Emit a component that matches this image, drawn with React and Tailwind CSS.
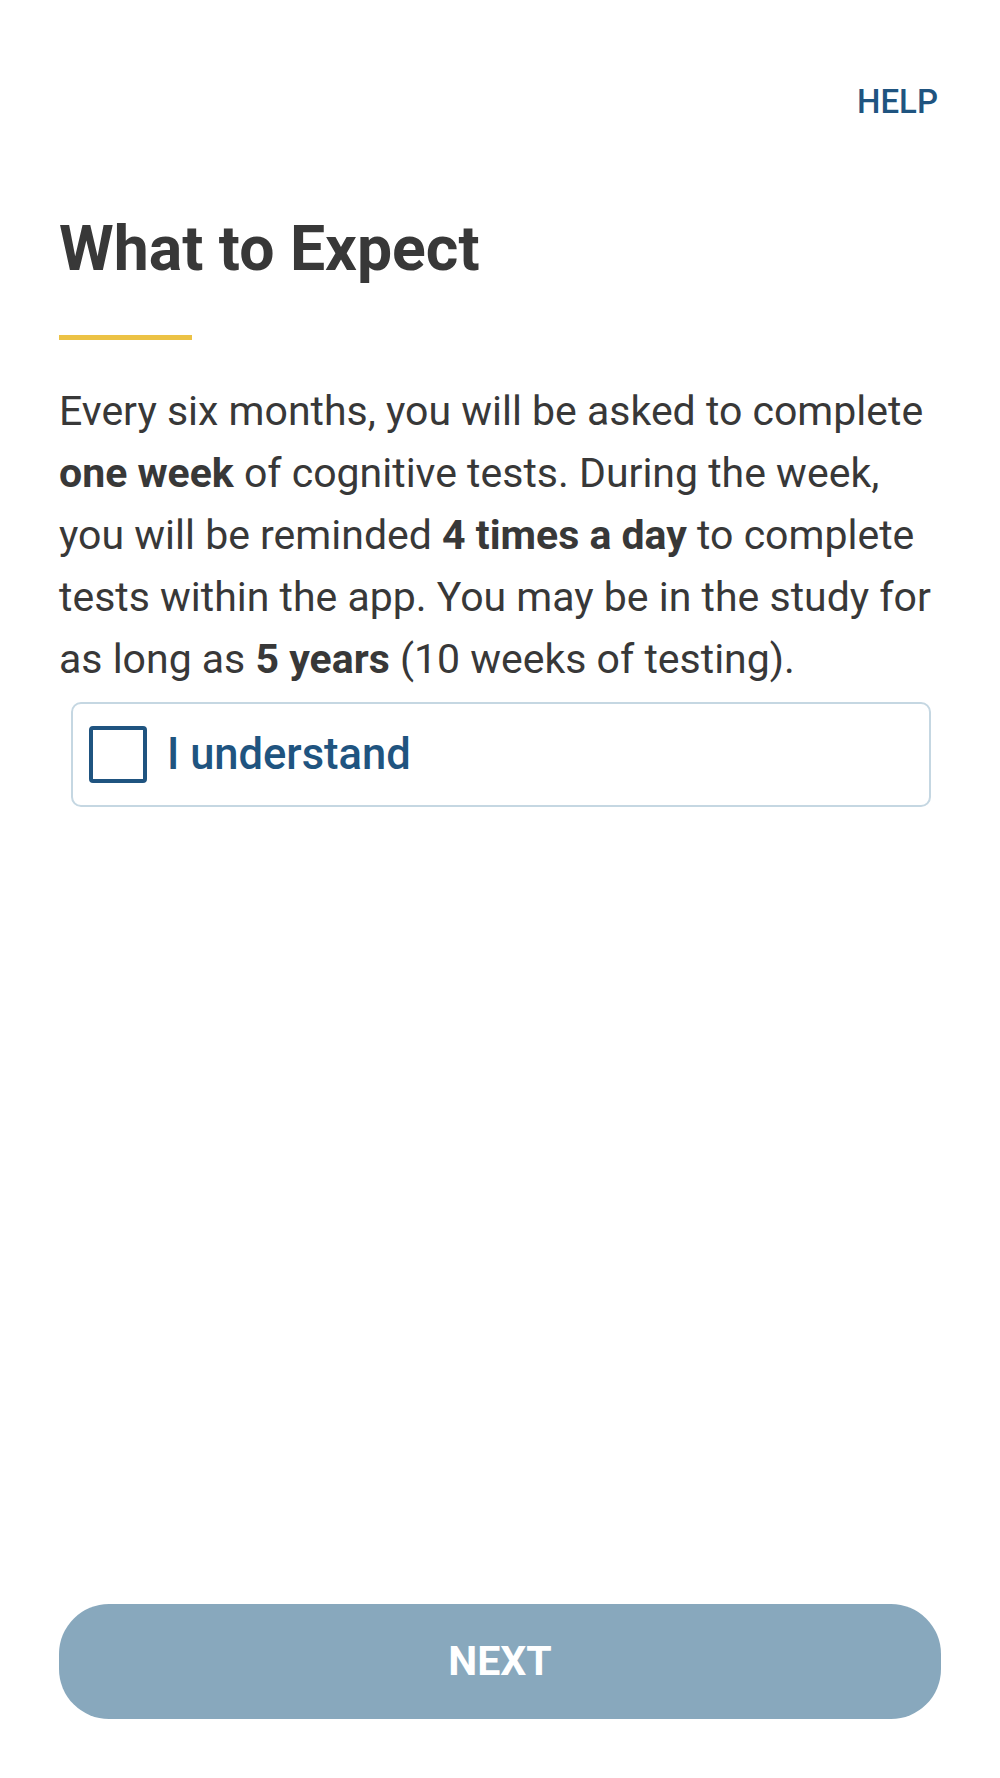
import React from 'react';

const App = () => {
  return (
    <div className="min-h-[1778px] bg-white flex flex-col px-[59px] font-['Roboto','Liberation_Sans',sans-serif] text-[#383838]">
      {/* Top bar */}
      <div className="flex justify-end pt-[83px] pr-[3px]">
        <button className="text-[33px] leading-[38px] font-medium text-[#1f5480]">HELP</button>
      </div>

      {/* Heading */}
      <h1 className="mt-[90px] text-[62.5px] leading-[76px] font-bold">What to Expect</h1>
      <div className="mt-[48px] h-[5px] w-[133px] bg-[#ecc245]" />

      {/* Body */}
      <p className="mt-[40px] text-[41px] leading-[62px]">
        Every six months, you will be asked to complete <strong className="font-bold">one week</strong> of
        cognitive tests. During the week, you will be reminded <strong className="font-bold">4 times a day</strong> to
        complete tests within the app. You may be in the study for as long as{' '}
        <strong className="font-bold">5 years</strong> (10 weeks of testing).
      </p>

      {/* Checkbox */}
      <label className="mt-[12px] ml-[12px] mr-[10px] h-[105px] flex items-center gap-[20px] pl-[16px] border-2 border-[#c5d7e2] rounded-[10px]">
        <span className="w-[58px] h-[57px] border-[4px] border-[#1f5480] rounded-[4px] shrink-0" />
        <span className="text-[43.5px] leading-[50px] font-medium text-[#1f5480]">I understand</span>
      </label>

      {/* Footer */}
      <div className="mt-auto pb-[59px]">
        <button className="w-full h-[115px] rounded-[50px] bg-[#88a8bd] text-white text-[41px] font-bold">
          NEXT
        </button>
      </div>
    </div>
  );
};

export default App;
